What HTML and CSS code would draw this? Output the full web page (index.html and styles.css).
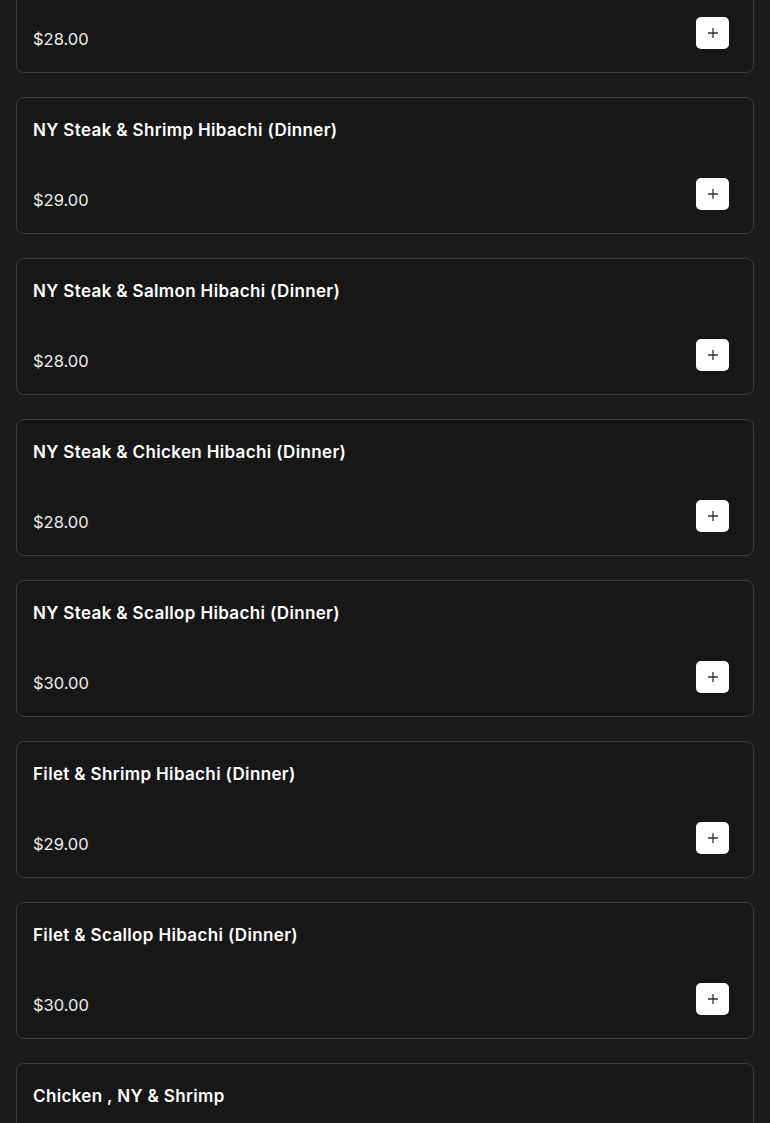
FILE: index.html
```html
<!DOCTYPE html>
<html>
<head>
<meta charset="utf-8">
<link rel="stylesheet" href="styles.css">
</head>
<body>
<main class="list">
  <div class="card"><h3 class="title">Filet &amp; Chicken Hibachi (Dinner)</h3><div class="row"><span class="price">$28.00</span><button class="add" aria-label="Add"><svg viewBox="0 0 12 12" width="12" height="12"><path d="M6 1v10M1 6h10" stroke="#333" stroke-width="1.3" fill="none"/></svg></button></div></div>
  <div class="card"><h3 class="title">NY Steak &amp; Shrimp Hibachi (Dinner)</h3><div class="row"><span class="price">$29.00</span><button class="add" aria-label="Add"><svg viewBox="0 0 12 12" width="12" height="12"><path d="M6 1v10M1 6h10" stroke="#333" stroke-width="1.3" fill="none"/></svg></button></div></div>
  <div class="card"><h3 class="title">NY Steak &amp; Salmon Hibachi (Dinner)</h3><div class="row"><span class="price">$28.00</span><button class="add" aria-label="Add"><svg viewBox="0 0 12 12" width="12" height="12"><path d="M6 1v10M1 6h10" stroke="#333" stroke-width="1.3" fill="none"/></svg></button></div></div>
  <div class="card"><h3 class="title">NY Steak &amp; Chicken Hibachi (Dinner)</h3><div class="row"><span class="price">$28.00</span><button class="add" aria-label="Add"><svg viewBox="0 0 12 12" width="12" height="12"><path d="M6 1v10M1 6h10" stroke="#333" stroke-width="1.3" fill="none"/></svg></button></div></div>
  <div class="card"><h3 class="title">NY Steak &amp; Scallop Hibachi (Dinner)</h3><div class="row"><span class="price">$30.00</span><button class="add" aria-label="Add"><svg viewBox="0 0 12 12" width="12" height="12"><path d="M6 1v10M1 6h10" stroke="#333" stroke-width="1.3" fill="none"/></svg></button></div></div>
  <div class="card"><h3 class="title">Filet &amp; Shrimp Hibachi (Dinner)</h3><div class="row"><span class="price">$29.00</span><button class="add" aria-label="Add"><svg viewBox="0 0 12 12" width="12" height="12"><path d="M6 1v10M1 6h10" stroke="#333" stroke-width="1.3" fill="none"/></svg></button></div></div>
  <div class="card"><h3 class="title">Filet &amp; Scallop Hibachi (Dinner)</h3><div class="row"><span class="price">$30.00</span><button class="add" aria-label="Add"><svg viewBox="0 0 12 12" width="12" height="12"><path d="M6 1v10M1 6h10" stroke="#333" stroke-width="1.3" fill="none"/></svg></button></div></div>
  <div class="card"><h3 class="title">Chicken , NY &amp; Shrimp</h3><div class="row"><span class="price">$30.00</span><button class="add" aria-label="Add"><svg viewBox="0 0 12 12" width="12" height="12"><path d="M6 1v10M1 6h10" stroke="#333" stroke-width="1.3" fill="none"/></svg></button></div></div>
</main>
</body>
</html>
```
FILE: styles.css
```css
html, body {
  margin: 0;
  padding: 0;
  background: #1b1b1b;
  overflow: hidden;
}
body {
  font-family: Inter, "Open Sans", sans-serif;
  color: #f2f2f2;
}
.list {
  display: flex;
  flex-direction: column;
  gap: 24px;
  margin-top: -64px;
  padding: 0 16px;
}
.card {
  background: #171717;
  border: 1px solid #3c3c3c;
  border-radius: 8px;
  padding: 20px 24px 23px 16px;
  display: flex;
  flex-direction: column;
  gap: 36px;
}
.title {
  margin: 0;
  font-size: 17px;
  line-height: 24px;
  font-weight: 600;
  color: #ffffff;
  letter-spacing: 0.35px;
}
.row {
  display: flex;
  justify-content: space-between;
  align-items: flex-end;
}
.price {
  font-size: 16.5px;
  line-height: 20px;
  font-weight: 400;
  color: #ececec;
}
.add {
  width: 33px;
  height: 32px;
  border: none;
  border-radius: 5px;
  background: #ffffff;
  padding: 0;
  display: flex;
  align-items: center;
  justify-content: center;
  cursor: pointer;
}
```
